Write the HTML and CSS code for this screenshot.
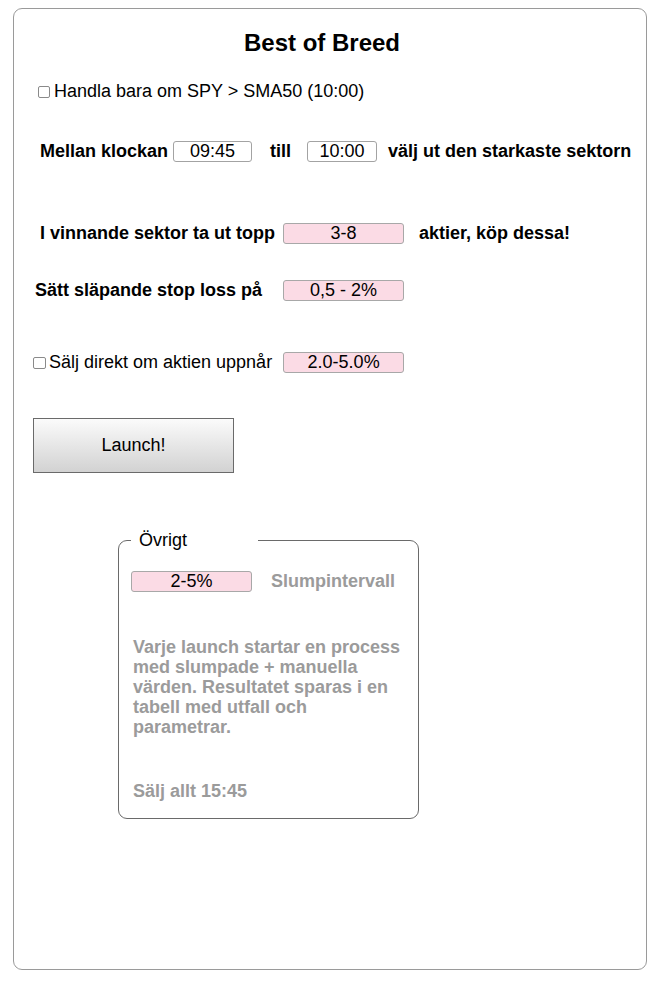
FILE: index.html
```html
<!DOCTYPE html>
<html lang="sv">
<head>
<meta charset="utf-8">
<title>Best of Breed</title>
<link rel="stylesheet" href="styles.css">
</head>
<body>
<div class="panel">
  <h1 class="title">Best of Breed</h1>

  <div class="row row-spy">
    <input type="checkbox" class="check">
    <span class="plain">Handla bara om SPY &gt; SMA50 (10:00)</span>
  </div>

  <div class="row row-time">
    <span class="label">Mellan klockan</span>
    <input class="field time-a" type="text" value="09:45">
    <span class="label till">till</span>
    <input class="field time-b" type="text" value="10:00">
    <span class="label after-b">välj ut den starkaste sektorn</span>
  </div>

  <div class="row row-top">
    <span class="label">I vinnande sektor ta ut topp</span>
    <input class="field pink top-in" type="text" value="3-8">
    <span class="label after-top">aktier, köp dessa!</span>
  </div>

  <div class="row row-stop">
    <span class="label">Sätt släpande stop loss på</span>
    <input class="field pink stop-in" type="text" value="0,5 - 2%">
  </div>

  <div class="row row-sell">
    <input type="checkbox" class="check">
    <span class="plain">Sälj direkt om aktien uppnår</span>
    <input class="field pink sell-in" type="text" value="2.0-5.0%">
  </div>

  <button class="launch" type="button">Launch!</button>

  <fieldset class="misc">
    <legend class="misc-legend">Övrigt</legend>
    <div class="misc-row">
      <input class="field pink rand-in" type="text" value="2-5%">
      <span class="muted rand-label">Slumpintervall</span>
    </div>
    <p class="muted misc-text">Varje launch startar en process med slumpade + manuella värden. Resultatet sparas i en tabell med utfall och parametrar.</p>
    <p class="muted misc-sell">Sälj allt 15:45</p>
  </fieldset>
</div>
</body>
</html>
```

FILE: styles.css
```css
html, body {
  margin: 0;
  padding: 0;
  background: #ffffff;
}

body {
  font-family: "Liberation Sans", Arial, sans-serif;
  color: #000;
}

.panel {
  box-sizing: border-box;
  margin: 8px 0 0 13px;
  width: 634px;
  height: 962px;
  border: 1px solid #9a9a9a;
  border-radius: 9px;
  display: flex;
  flex-direction: column;
  align-items: flex-start;
}

.title {
  align-self: stretch;
  margin: 20px 16px 0 0;
  font-size: 24px;
  line-height: 28px;
  font-weight: bold;
  text-align: center;
}

.row {
  display: flex;
  align-items: center;
  height: 21px;
  font-size: 18px;
  line-height: 21px;
  white-space: nowrap;
}

.label {
  font-weight: bold;
}

.plain {
  font-weight: normal;
}

.check {
  appearance: none;
  -webkit-appearance: none;
  box-sizing: border-box;
  width: 12px;
  height: 12px;
  margin: 0;
  border: 1px solid #8a8a8a;
  border-radius: 2px;
  background: #fff;
}

.field {
  box-sizing: border-box;
  height: 21px;
  margin: 0;
  padding: 0;
  border: 1px solid #a3a3a3;
  border-radius: 3px;
  background: #fff;
  font-family: "Liberation Sans", Arial, sans-serif;
  font-size: 18px;
  line-height: 19px;
  color: #000;
  text-align: center;
}

.pink {
  background: #fbdbe5;
  border-color: #a8a8a8;
}

.row-spy {
  margin: 24px 0 0 24px;
}
.row-spy .check {
  margin-right: 4px;
}

.row-time {
  margin: 39px 0 0 26px;
}
.time-a {
  width: 79px;
  margin-left: 5px;
}
.till {
  margin-left: 18px;
}
.time-b {
  width: 70px;
  margin-left: 16px;
}
.after-b {
  margin-left: 11px;
}

.row-top {
  margin: 61px 0 0 26px;
}
.top-in {
  width: 121px;
  margin-left: 8px;
}
.after-top {
  margin-left: 15px;
}

.row-stop {
  margin: 36px 0 0 21px;
}
.stop-in {
  width: 121px;
  margin-left: 21px;
}

.row-sell {
  margin: 51px 0 0 19px;
}
.row-sell .check {
  width: 13px;
  height: 12px;
  margin-right: 3px;
}
.sell-in {
  width: 121px;
  margin-left: 11px;
}

.launch {
  box-sizing: border-box;
  width: 201px;
  height: 55px;
  margin: 45px 0 0 19px;
  padding: 0;
  border: 1px solid #6a6a6a;
  border-radius: 0;
  background: linear-gradient(#fbfbfb, #d2d2d2);
  font-family: "Liberation Sans", Arial, sans-serif;
  font-size: 18px;
  color: #000;
}

.misc {
  box-sizing: border-box;
  width: 301px;
  height: 289px;
  margin: 57px 0 0 104px;
  padding: 21px 12px 0 12px;
  border: 1px solid #6a6a6a;
  border-radius: 9px;
  min-inline-size: 0;
}

.misc-legend {
  box-sizing: border-box;
  width: 127px;
  padding: 0 8px;
  font-size: 18px;
  line-height: 20px;
}

.misc-row {
  display: flex;
  align-items: center;
  height: 21px;
  font-size: 18px;
}
.rand-in {
  width: 121px;
}
.rand-label {
  margin-left: 19px;
}

.muted {
  color: #9b9b9b;
  font-weight: bold;
  font-size: 18px;
}

.misc-text {
  margin: 45px 0 0 2px;
  line-height: 20px;
}

.misc-sell {
  margin: 44px 0 0 2px;
  line-height: 20px;
}
```
